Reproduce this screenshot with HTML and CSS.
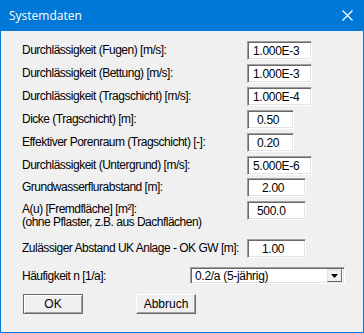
FILE: index.html
```html
<!DOCTYPE html>
<html lang="de">

<head>
    <meta charset="UTF-8">
    <title>Systemdaten</title>
    <link rel="stylesheet" href="styles.css">
</head>

<body>
    <div class="window">
        <div class="titlebar">
            <span class="title">Systemdaten</span>
            <svg class="close" width="11" height="11" viewBox="0 0 11 11">
                <path d="M0.5 0.5 L10.5 10.5 M10.5 0.5 L0.5 10.5" stroke="#fff" stroke-width="1.2" fill="none" />
            </svg>
        </div>

        <div class="content">
            <label>Durchlässigkeit (Fugen) [m/s]:</label>
            <input class="field wide" type="text" value="1.000E-3">

            <label>Durchlässigkeit (Bettung) [m/s]:</label>
            <input class="field wide" type="text" value="1.000E-3">

            <label>Durchlässigkeit (Tragschicht) [m/s]:</label>
            <input class="field wide" type="text" value="1.000E-4">

            <label>Dicke (Tragschicht) [m]:</label>
            <input class="field small" type="text" value="0.50">

            <label>Effektiver Porenraum (Tragschicht) [-]:</label>
            <input class="field small" type="text" value="0.20">

            <label>Durchlässigkeit (Untergrund) [m/s]:</label>
            <input class="field wide" type="text" value="5.000E-6">

            <label>Grundwasserflurabstand [m]:</label>
            <input class="field mid indent" type="text" value="2.00">

            <label class="two-lines">A(u) [Fremdfläche] [m²]:<br>(ohne Pflaster, z.B. aus Dachflächen)</label>
            <input class="field mid" type="text" value="500.0">

            <label>Zulässiger Abstand UK Anlage - OK GW [m]:</label>
            <input class="field mid indent" type="text" value="1.00">

            <label>Häufigkeit n [1/a]:</label>
            <div class="select">
                <span>0.2/a (5-jährig)</span>
                <span class="arrow">
                    <svg width="7" height="4" viewBox="0 0 7 4"><path d="M0 0 H7 L3.5 4 Z" fill="#000" /></svg>
                </span>
            </div>

            <div class="buttons">
                <button class="btn default">OK</button>
                <button class="btn">Abbruch</button>
            </div>
        </div>
    </div>
</body>

</html>
```

FILE: styles.css
```css
body {
    margin: 0;
    padding: 0;
    font-family: 'Liberation Sans', Arial, sans-serif;
    font-size: 12px;
    color: #000;
}

.window {
    width: 364px;
    height: 333px;
    box-sizing: border-box;
    border: 1px solid #0078d7;
    border-top: none;
    background-color: #f0f0f0;
}

.titlebar {
    height: 31px;
    margin: 0 -1px;
    background-color: #0078d7;
    display: flex;
    align-items: center;
    justify-content: space-between;
    padding: 0 11px 0 9px;
}

.title {
    color: #fff;
    font-family: 'Open Sans', 'Noto Sans', sans-serif;
    font-size: 12px;
}

.close {
    display: block;
}

/* label column starts at x=22, fields at x=247 */
.content {
    display: grid;
    grid-template-columns: 225px auto;
    grid-template-rows: repeat(5, 23px) 22px 23px 38px 28px 27px auto;
    align-items: start;
    padding: 10px 0 0 21px;
}

label {
    line-height: 13px;
    padding-top: 3px;
    letter-spacing: -0.5px;
    white-space: nowrap;
}

label.two-lines {
    line-height: 13px;
    padding-top: 2px;
}

.field {
    box-sizing: border-box;
    height: 19px;
    margin: 0;
    padding: 0 0 0 5px;
    font-family: 'Liberation Sans', Arial, sans-serif;
    font-size: 12px;
    letter-spacing: -0.3px;
    background-color: #fff;
    border-style: solid;
    border-width: 1px;
    border-color: #a0a0a0 #fff #fff #a0a0a0;
    box-shadow: inset 1px 1px 0 #696969, inset -1px -1px 0 #e3e3e3;
    outline: none;
}

.wide {
    width: 65px;
}

.small {
    width: 47px;
    padding-left: 9px;
}

.mid {
    width: 59px;
    padding-left: 9px;
}

.mid.indent {
    padding-left: 14px;
}

.select {
    margin-left: -57px;
    width: 155px;
    height: 17px;
    box-sizing: border-box;
    display: flex;
    align-items: center;
    justify-content: space-between;
    background-color: #fff;
    border: 1px solid;
    border-color: #a0a0a0 #fff #fff #a0a0a0;
    box-shadow: inset 1px 1px 0 #696969, inset -1px -1px 0 #e3e3e3;
    padding: 0 2px 0 4px;
    letter-spacing: -0.3px;
}

.arrow {
    width: 15px;
    height: 13px;
    box-sizing: border-box;
    background-color: #f0f0f0;
    border: 1px solid;
    border-color: #e3e3e3 #696969 #696969 #e3e3e3;
    display: flex;
    align-items: center;
    justify-content: center;
}

.arrow svg {
    display: block;
}

.buttons {
    grid-column: 1 / 3;
    display: flex;
    gap: 53px;
    margin: 0 0 0 1px;
}

.btn {
    width: 60px;
    height: 20px;
    margin: 0;
    padding: 0;
    font-family: 'Liberation Sans', Arial, sans-serif;
    font-size: 12px;
    background-color: #f0f0f0;
    border: 1px solid;
    border-color: #fff #696969 #696969 #fff;
    box-shadow: inset -1px -1px 0 #a0a0a0;
}

.btn.default {
    border: 1px solid #696969;
    box-shadow: inset 1px 1px 0 #fff, inset -1px -1px 0 #a0a0a0;
}
```
